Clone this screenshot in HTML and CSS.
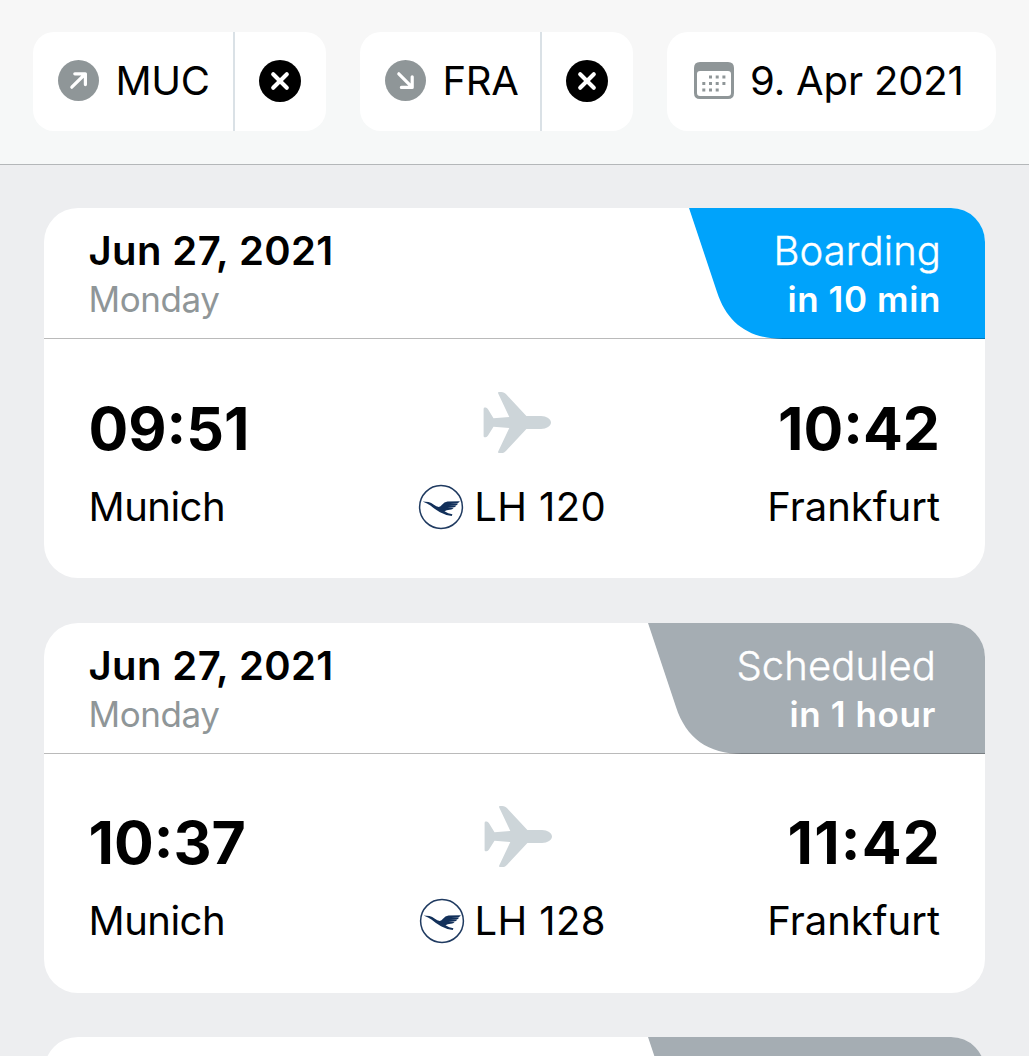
FILE: index.html
```html
<!DOCTYPE html>
<html lang="en">
<head>
<meta charset="utf-8">
<title>Flights</title>
<link rel="stylesheet" href="styles.css">
</head>
<body>
<svg class="defs" aria-hidden="true">
  <symbol id="plane" viewBox="0 0 68 61">
    <path d="M15.7 0H18.2C20.4 0 22 .9 23.4 2.6L43.4 24H58C63.5 24 68 27.2 68 30.5S63.5 37 58 37H43.4L23.4 58.4C22 60.1 20.4 61 18.2 61H15.7Q14.8 60.8 15.2 59.5L26.3 36.1L10.5 34.8L5 43.6Q4 45.2 2.6 45.2H1.6Q.6 45.2 .6 44V17Q.6 15.6 1.8 15.6H2.6Q4 15.6 5 17.2L10.5 26.2L26.3 24.9L15.2 1.5Q14.8 .2 15.7 0Z" fill="#cdd5d9"/>
  </symbol>
  <symbol id="crane" viewBox="0 0 46 46">
    <circle cx="23" cy="23" r="21.4" fill="#fff" stroke="#1f3a60" stroke-width="1.5"/>
    <path d="M4.6 17.4L10.5 17.9Q13.5 18.6 15.5 20.4Q18.5 22.8 20.8 23Q22.6 22.8 24 20.8Q26.2 17.9 29.5 17.6L41.8 17.3Q41.4 19 39 19.2L32 19.9L40 19.6Q39.5 21.4 37.2 21.5L30.6 22L38.2 21.8Q37.4 23.6 35 23.6L29.5 24L35.6 24Q34.4 25.7 32 25.7Q28.5 25.6 26.5 27.2Q30 29.6 34.4 30.2L33.8 32Q27.5 31.2 22 28.2Q16.5 25 12.4 21.5Q9.6 19.2 4.6 17.4Z" fill="#12305a"/>
  </symbol>
  <symbol id="clear" viewBox="0 0 42 42">
    <circle cx="21" cy="21" r="21"/>
    <path d="M14.2 14.2L27.8 27.8M27.8 14.2L14.2 27.8" stroke="#fff" stroke-width="4.1" stroke-linecap="round"/>
  </symbol>
  <symbol id="arrow" viewBox="0 0 41 41">
    <circle cx="20.5" cy="20.5" r="20.5" fill="#8f9698"/>
    <path d="M13.8 27.2L27.2 14M16.8 13.8H27.4V24.6" fill="none" stroke="#fff" stroke-width="3.2" stroke-linecap="round" stroke-linejoin="round"/>
  </symbol>
</svg>

<header class="filters">
  <div class="chip">
    <div class="chip-main"><svg class="arrow"><use href="#arrow"/></svg><span>MUC</span></div>
    <div class="chip-clear"><svg class="clear"><use href="#clear"/></svg></div>
  </div>
  <div class="chip chip-second">
    <div class="chip-main"><svg class="arrow arrow-down"><use href="#arrow"/></svg><span>FRA</span></div>
    <div class="chip-clear"><svg class="clear"><use href="#clear"/></svg></div>
  </div>
  <div class="chip chip-date">
    <svg class="calendar" viewBox="0 0 40 37">
      <path fill="#8f9698" fill-rule="evenodd" d="M6 0H34Q40 0 40 6V31Q40 37 34 37H6Q0 37 0 31V6Q0 0 6 0ZM6 9Q3 9 3 12V31Q3 34 6 34H34Q37 34 37 31V12Q37 9 34 9Z"/>
      <path stroke="#8f9698" stroke-width="3" stroke-dasharray="3 3.7" d="M15 15H31.5M8.3 21.5H31.5M8.3 28H25"/>
    </svg>
    <span class="date-value">9. Apr 2021</span>
  </div>
</header>

<main class="flights">
  <article class="card">
    <div class="card-head">
      <div><div class="date">Jun 27, 2021</div><div class="weekday">Monday</div></div>
      <div class="status boarding">
        <svg class="status-shape" viewBox="0 0 296 131" preserveAspectRatio="none"><path d="M0 0H296V131H94C60 131 38 115 28 84Z" fill="#00a3fb"/></svg>
        <div class="status-name">Boarding</div><div class="status-time">in 10 min</div>
      </div>
    </div>
    <div class="route">
      <div class="departure"><div class="time">09:51</div><div class="city">Munich</div></div>
      <div class="middle"><svg class="plane"><use href="#plane"/></svg><div class="flight"><svg class="crane"><use href="#crane"/></svg><span>LH 120</span></div></div>
      <div class="arrival"><div class="time">10:42</div><div class="city">Frankfurt</div></div>
    </div>
  </article>
  <article class="card">
    <div class="card-head">
      <div><div class="date">Jun 27, 2021</div><div class="weekday">Monday</div></div>
      <div class="status scheduled">
        <svg class="status-shape" viewBox="0 0 337 131" preserveAspectRatio="none"><path d="M0 0H337V131H94C60 131 38 115 28 84Z" fill="#a5adb3"/></svg>
        <div class="status-name">Scheduled</div><div class="status-time">in 1 hour</div>
      </div>
    </div>
    <div class="route">
      <div class="departure"><div class="time">10:37</div><div class="city">Munich</div></div>
      <div class="middle"><svg class="plane"><use href="#plane"/></svg><div class="flight"><svg class="crane"><use href="#crane"/></svg><span>LH 128</span></div></div>
      <div class="arrival"><div class="time spaced">11<span class="colon">:</span>42</div><div class="city">Frankfurt</div></div>
    </div>
  </article>
  <article class="card">
    <div class="card-head">
      <div></div>
      <div class="status scheduled">
        <svg class="status-shape" viewBox="0 0 337 131" preserveAspectRatio="none"><path d="M0 0H337V131H94C60 131 38 115 28 84Z" fill="#a5adb3"/></svg>
      </div>
    </div>
  </article>
</main>
</body>
</html>
```

FILE: styles.css
```css
* { box-sizing: border-box; }
html, body { margin: 0; height: 1056px; overflow: hidden; }
body {
  background: #edeef0;
  color: #000;
  font-family: Inter, "Liberation Sans", sans-serif;
  font-size: 40px;
  display: flex;
  flex-direction: column;
}
svg { display: block; flex: none; }
.defs { position: absolute; width: 0; height: 0; }

.filters {
  flex: none;
  height: 164.5px;
  padding: 32px 33px 0;
  display: flex;
  align-items: flex-start;
  background: linear-gradient(#f7f7f7 0 80px, #f6f8f8 80px);
  border-bottom: 1px solid #b4b7b9;
}
.chip {
  width: 293px;
  height: 98.5px;
  padding-bottom: 1px;
  display: flex;
  background: #fff;
  border-radius: 21px;
  white-space: nowrap;
  letter-spacing: -.3px;
}
.chip-second { width: 273px; margin-left: 34px; }
.chip-date { width: 329px; margin-left: 34px; padding-left: 27px; align-items: center; letter-spacing: -.15px; }
.chip-main { flex: 1; display: flex; align-items: center; margin-bottom: -1px; padding: 0 0 2px 25.4px; border-right: 2px solid #dae1e6; }
.chip-main span { margin-left: 16px; }
.chip-clear { width: 91px; display: flex; align-items: center; padding-left: 24px; }
.arrow { width: 41px; height: 41px; }
.arrow-down { transform: rotate(90deg); }
.clear { width: 42px; height: 42px; }
.calendar { width: 40px; height: 37px; }
.date-value { margin-left: 16px; }

.flights {
  flex: 1;
  min-height: 0;
  padding: 43.5px 44px 0;
  display: flex;
  flex-direction: column;
  gap: 44.5px;
  overflow: hidden;
}
.card { flex: none; height: 370px; background: #fff; border-radius: 34px; overflow: hidden; }
.card-head {
  position: relative;
  height: 131px;
  padding: 19px 0 0 44.5px;
  display: flex;
  justify-content: space-between;
  line-height: 48.5px;
}
.card-head::after {
  content: "";
  position: absolute;
  inset: auto 0 0;
  height: 1px;
  background: rgba(0, 0, 0, .27);
}
.date { font-weight: 600; letter-spacing: .4px; }
.weekday { font-size: 35px; letter-spacing: -.4px; margin-top: -.5px; color: #8f9698; }
.status { position: relative; margin-top: -19px; padding: 19px 44px 0 0; height: 131px; color: #fff; text-align: right; }
.boarding { width: 296px; }
.scheduled { width: 337px; padding-right: 49px; }
.status-shape { position: absolute; inset: 0; width: 100%; height: 100%; }
.status-name, .status-time { position: relative; }
.status-name { font-weight: 300; letter-spacing: .1px; -webkit-text-stroke: .4px #fff; }
.status-time { font-size: 35px; font-weight: 600; letter-spacing: .6px; margin-top: -.5px; }

.route { display: grid; grid-template-columns: 1fr auto 1fr; padding: 50.5px 45px 0 44.5px; line-height: 78px; }
.time { font-size: 59px; font-weight: 700; }
.spaced { letter-spacing: 1.2px; margin-right: -1.2px; }
.colon { position: relative; top: -.09em; }
.departure .city { letter-spacing: -.5px; }
.arrival { text-align: right; }
.middle { margin-right: 4px; }
.plane { width: 68px; height: 61px; margin: 2px 0 15px 65px; }
.flight { display: flex; align-items: center; letter-spacing: .4px; }
.crane { width: 46px; height: 46px; margin-right: 10px; }
```
